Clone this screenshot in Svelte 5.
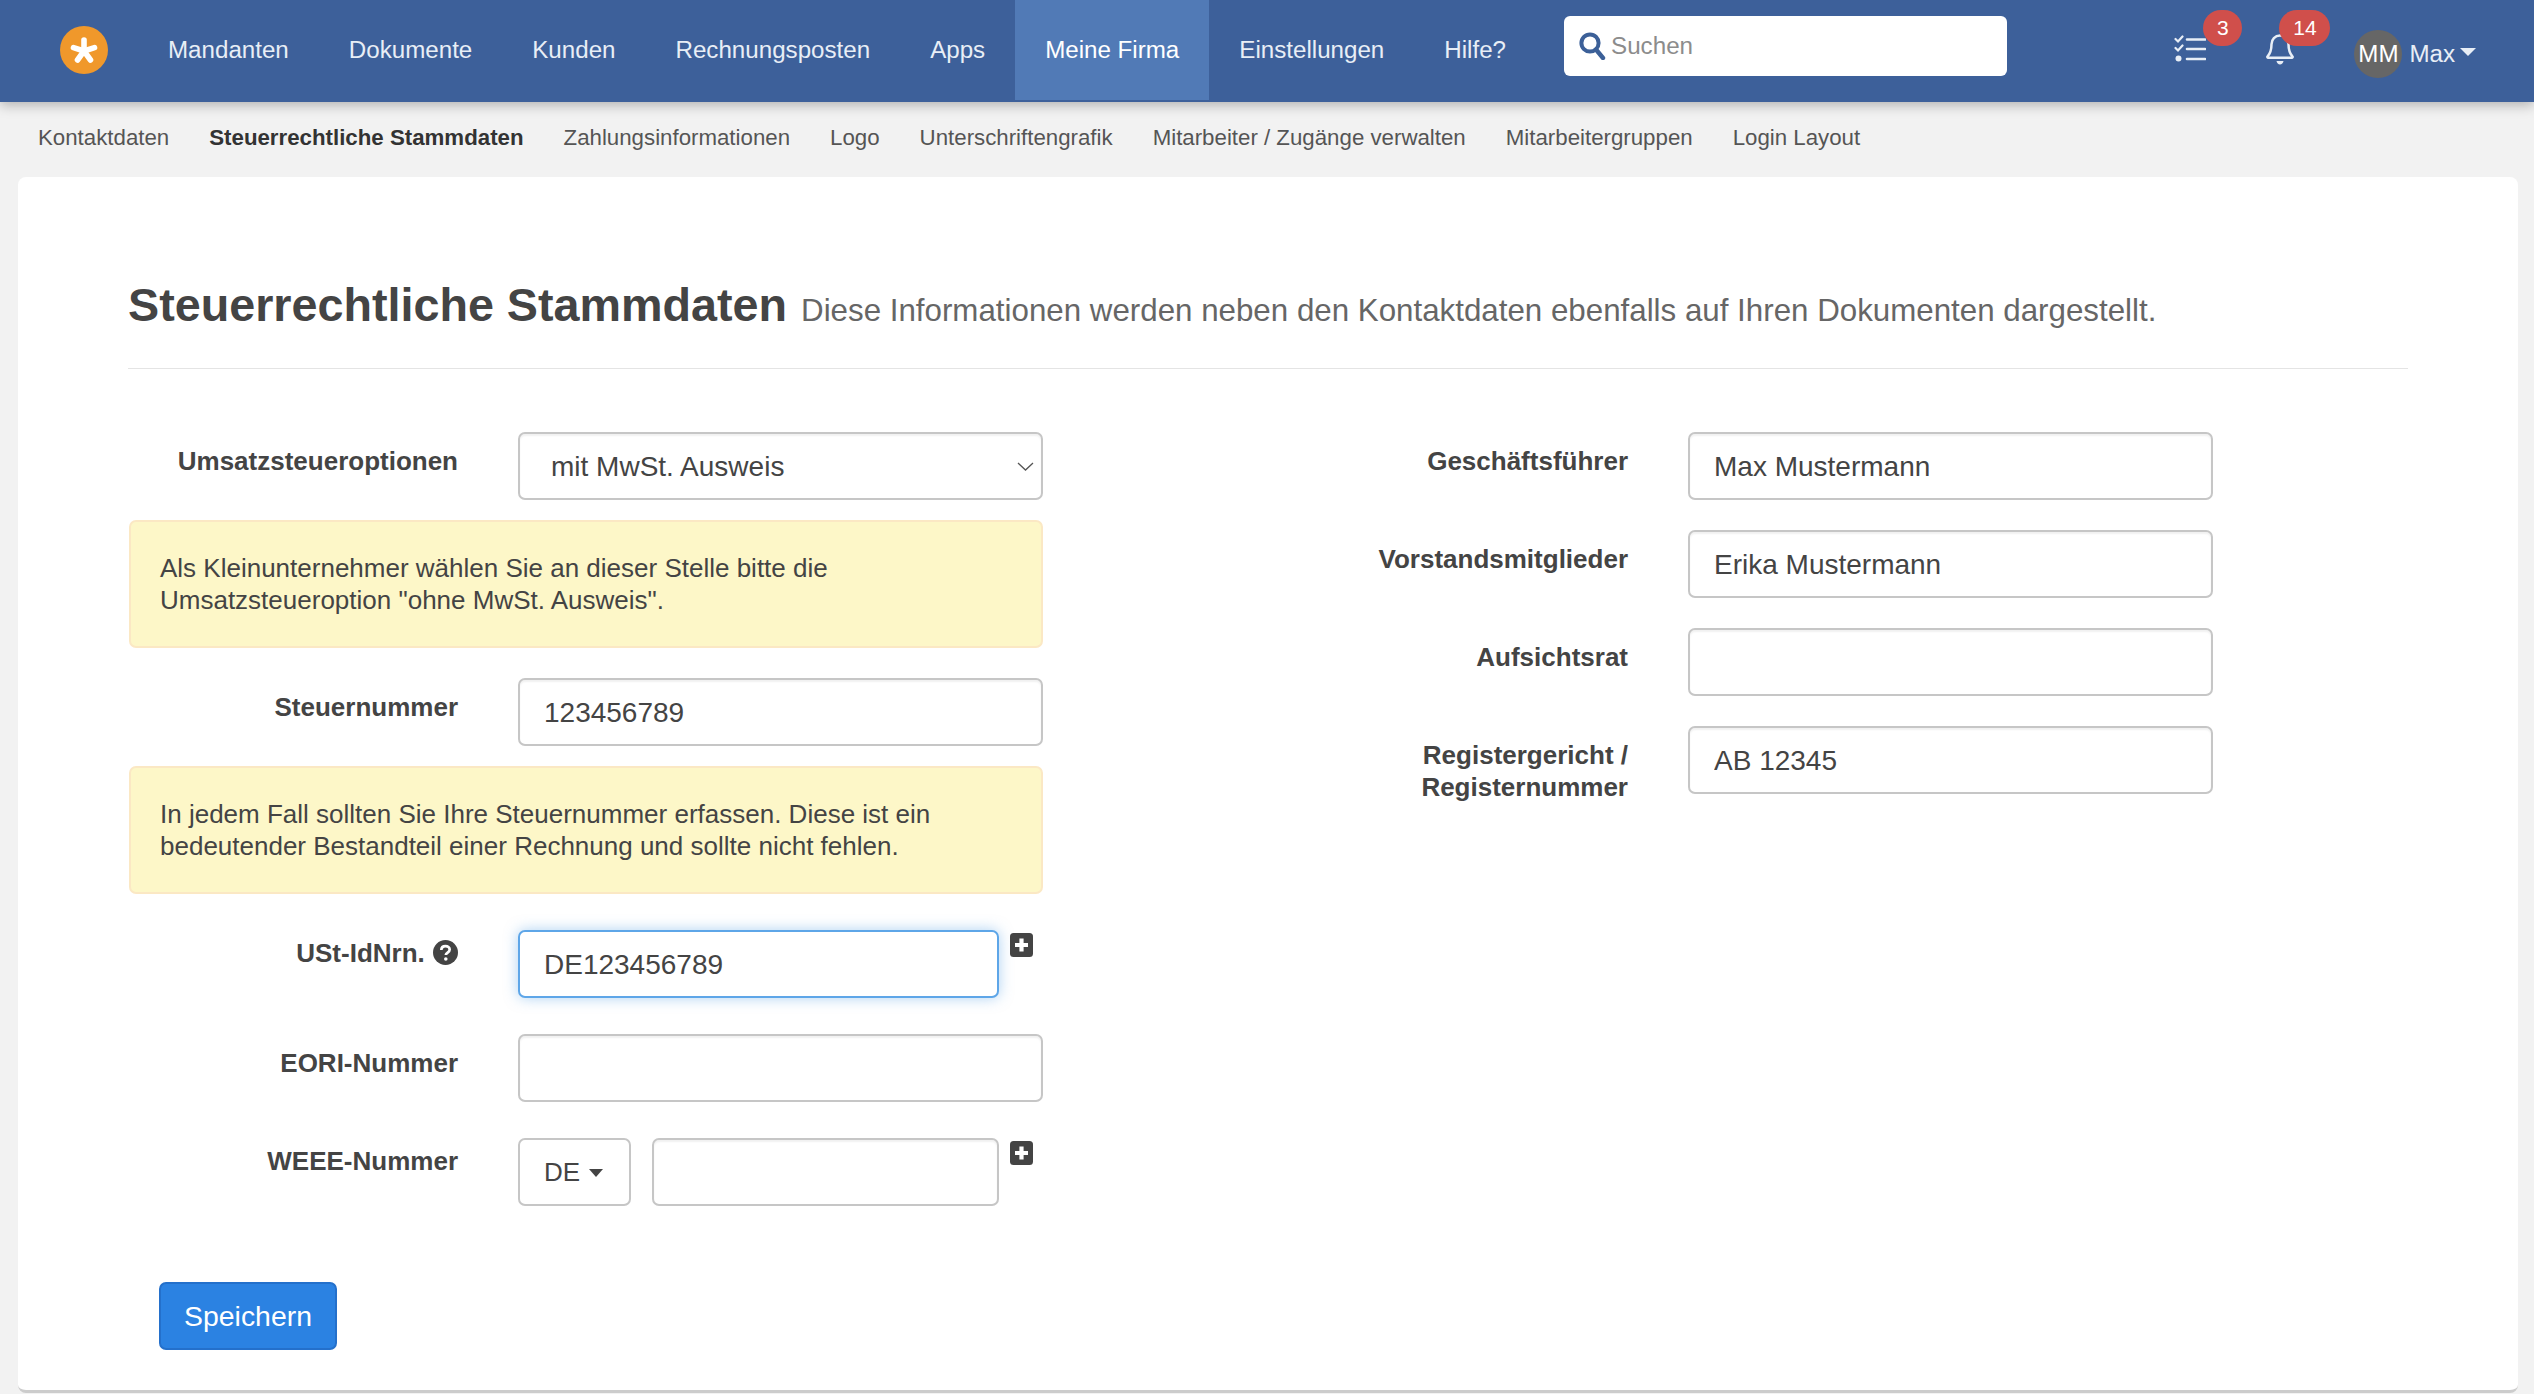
<script>
  const navLinks = ['Mandanten', 'Dokumente', 'Kunden', 'Rechnungsposten', 'Apps', 'Meine Firma', 'Einstellungen', 'Hilfe?'];
  const subLinks = ['Kontaktdaten', 'Steuerrechtliche Stammdaten', 'Zahlungsinformationen', 'Logo', 'Unterschriftengrafik', 'Mitarbeiter / Zugänge verwalten', 'Mitarbeitergruppen', 'Login Layout'];
  const rightFields = [
    { label: 'Geschäftsführer', value: 'Max Mustermann' },
    { label: 'Vorstandsmitglieder', value: 'Erika Mustermann' },
    { label: 'Aufsichtsrat', value: '' },
    { label: 'Registergericht / Registernummer', value: 'AB 12345' },
  ];
</script>

<header class="navbar">
  <a class="logo" href="#top" aria-label="Startseite">
    <svg viewBox="0 0 48 48" width="48" height="48">
      <circle cx="24" cy="24" r="24" fill="#f0982b" />
      <g stroke="#fff" stroke-width="5.6" stroke-linecap="round">
        <path d="M24 25V14" />
        <path d="M24 25L34.5 21.6" />
        <path d="M24 25L30.5 34" />
        <path d="M24 25L17.5 34" />
        <path d="M24 25L13.5 21.6" />
      </g>
    </svg>
  </a>
  <nav class="nav-links">
    {#each navLinks as link}
      <a href="#top" class:active={link === 'Meine Firma'}>{link}</a>
    {/each}
  </nav>
  <div class="search">
    <svg viewBox="0 0 28 28" width="28" height="28">
      <circle cx="12" cy="11" r="8.6" fill="none" stroke="#3c6098" stroke-width="4" />
      <path d="M18 17.5L25 26" stroke="#3c6098" stroke-width="4.4" stroke-linecap="round" />
    </svg>
    <input type="text" placeholder="Suchen" />
  </div>
  <div class="tools">
    <div class="tool tasks">
      <svg viewBox="0 0 32 27" width="32" height="27">
        <g fill="none" stroke="#e8eef6" stroke-linecap="round">
          <path d="M1.5 4l2.5 2.5L8.5 1.5" stroke-width="2.2" />
          <path d="M1.5 13l2.5 2.5L8.5 10.5" stroke-width="2.2" />
          <path d="M13 4.500H31M13 14H31M13 24H31" stroke-width="2.6" />
        </g>
        <circle cx="4.500" cy="23.500" r="3" fill="#e8eef6" />
      </svg>
      <span class="badge three">3</span>
    </div>
    <div class="tool bell">
      <svg viewBox="0 0 28 32" width="28" height="32">
        <path d="M14 2.500c-5 0-8.500 3.800-8.500 8.800 0 6.500-1.500 9.500-4 12.200-.4.500 0 1.300.6 1.300h23.800c.6 0 1-.8.600-1.300-2.500-2.700-4-5.700-4-12.200 0-5-3.500-8.800-8.500-8.800z" fill="none" stroke="#e8eef6" stroke-width="2.500" stroke-linejoin="round" />
        <path d="M10.500 28h7c-.4 2-1.800 3.500-3.500 3.500s-3.100-1.500-3.500-3.500z" fill="#e8eef6" />
      </svg>
      <span class="badge fourteen">14</span>
    </div>
    <div class="user">
      <span class="avatar">MM</span>
      <span class="user-name">Max</span>
      <span class="user-caret"></span>
    </div>
  </div>
</header>

<nav class="subnav">
  {#each subLinks as link}
    <a href="#top" class:current={link === 'Steuerrechtliche Stammdaten'}>{link}</a>
  {/each}
</nav>

<main class="card">
  <div class="page-header">
    <h1>Steuerrechtliche Stammdaten</h1>
    <small>Diese Informationen werden neben den Kontaktdaten ebenfalls auf Ihren Dokumenten dargestellt.</small>
  </div>

  <div class="columns">
    <div class="col">
      <div class="row before-alert">
        <span class="label">Umsatzsteueroptionen</span>
        <div class="select-wrap">
          <select>
            <option>mit MwSt. Ausweis</option>
            <option>ohne MwSt. Ausweis</option>
          </select>
          <svg class="chevron" viewBox="0 0 17 9" width="17" height="9">
            <path d="M1 1l7.500 7L16 1" fill="none" stroke="#555" stroke-width="1.300" />
          </svg>
        </div>
      </div>
      <div class="alert">Als Kleinunternehmer wählen Sie an dieser Stelle bitte die Umsatzsteueroption "ohne MwSt. Ausweis".</div>

      <div class="row before-alert">
        <span class="label">Steuernummer</span>
        <input type="text" value="123456789" />
      </div>
      <div class="alert last-alert">In jedem Fall sollten Sie Ihre Steuernummer erfassen. Diese ist ein bedeutender Bestandteil einer Rechnung und sollte nicht fehlen.</div>

      <div class="row">
        <span class="label high">
          USt-IdNrn.
          <svg class="help" viewBox="0 0 24 24" width="25" height="25">
            <circle cx="12" cy="12" r="12" fill="#444" />
            <path d="M8 9.500c0-2.400 1.800-3.700 4-3.700s4 1.300 4 3.300c0 3-3.700 2.800-3.700 5.400" fill="none" stroke="#fff" stroke-width="2.600" />
            <circle cx="12.300" cy="18.300" r="1.700" fill="#fff" />
          </svg>
        </span>
        <div class="with-plus">
          <input class="focused" type="text" value="DE123456789" />
          <svg class="plus" viewBox="0 0 23 24" width="23" height="24">
            <rect width="23" height="24" rx="3.500" fill="#444" />
            <path d="M11.500 5.500v13M5 12h13" stroke="#fff" stroke-width="4.200" />
          </svg>
        </div>
      </div>

      <div class="row">
        <span class="label">EORI-Nummer</span>
        <input type="text" />
      </div>

      <div class="row last">
        <span class="label high">WEEE-Nummer</span>
        <div class="with-plus">
          <button class="country" type="button">DE <span class="caret"></span></button>
          <input type="text" />
          <svg class="plus" viewBox="0 0 23 24" width="23" height="24">
            <rect width="23" height="24" rx="3.500" fill="#444" />
            <path d="M11.500 5.500v13M5 12h13" stroke="#fff" stroke-width="4.200" />
          </svg>
        </div>
      </div>

      <button class="save" type="button">Speichern</button>
    </div>

    <div class="col">
      {#each rightFields as field}
        <div class="row side">
          <span class="label">{field.label}</span>
          <input type="text" value={field.value} />
        </div>
      {/each}
    </div>
  </div>
</main>

<style>
  :global(body) {
    background: #f2f2f2;
    color: #444;
    font-family: "Liberation Sans", Arial, sans-serif;
    overflow: hidden;
  }

  a {
    text-decoration: none;
    color: inherit;
  }

  .navbar {
    display: flex;
    height: 102px;
    background: #3d609a;
    box-shadow: 0 3px 12px rgba(0, 0, 0, 0.28);
    position: relative;
    font-size: 24.15px;
    color: #e8eef6;
  }

  .logo {
    display: block;
    height: 48px;
    margin: 26px 30px 0 60px;
  }

  .nav-links {
    display: flex;
    height: 100px;
  }

  .nav-links a {
    display: flex;
    align-items: center;
    padding: 0 30px;
  }

  .nav-links a.active {
    background: #517ab6;
    color: #fff;
  }

  .search {
    display: flex;
    align-items: center;
    gap: 5px;
    width: 443px;
    height: 60px;
    margin: 16px 0 0 28px;
    padding-left: 14px;
    box-sizing: border-box;
    background: #fff;
    border-radius: 6px;
  }

  .search input {
    border: 0;
    outline: 0;
    height: 50px;
    padding: 0;
    margin: 0;
    width: 380px;
    box-shadow: none;
    border-radius: 0;
    font-size: 24.2px;
  }

  .search input::placeholder {
    color: #8c8c8c;
  }

  .tools {
    display: flex;
    margin-left: auto;
    padding-right: 58px;
  }

  .tool {
    position: relative;
  }

  .tasks {
    width: 32px;
    margin-top: 35px;
  }

  .tasks svg,
  .bell svg {
    display: block;
  }

  .bell {
    width: 28px;
    margin: 33px 0 0 60px;
  }

  .badge {
    position: absolute;
    height: 36px;
    border-radius: 18px;
    background: #d04f4b;
    color: #fff;
    font-size: 21px;
    line-height: 35px;
    text-align: center;
  }

  .three {
    left: 29px;
    top: -25px;
    width: 39px;
  }

  .fourteen {
    left: 13px;
    top: -23px;
    width: 51px;
  }

  .user {
    display: flex;
    align-items: center;
    height: 48px;
    margin: 30px 0 0 60px;
  }

  .avatar {
    width: 48px;
    height: 48px;
    border-radius: 50%;
    background: #666;
    color: #fff;
    text-align: center;
    line-height: 48px;
  }

  .user-name {
    margin-left: 7px;
  }

  .user-caret {
    margin: 0 0 4px 5px;
    border-top: 8px solid #e8eef6;
    border-left: 8px solid transparent;
    border-right: 8px solid transparent;
  }

  .subnav {
    display: flex;
    gap: 40px;
    height: 72px;
    padding: 0 0 3px 38px;
    align-items: center;
    font-size: 22.27px;
    color: #555;
  }

  .subnav a.current {
    font-weight: 700;
    color: #333;
  }

  .card {
    margin: 0 16px 0 18px;
    height: 1216px;
    box-sizing: border-box;
    padding: 0 110px;
    background: #fff;
    border-radius: 8px;
    border-bottom: 3px solid #ccc;
  }

  .page-header {
    display: flex;
    align-items: baseline;
    gap: 14px;
    height: 192px;
    box-sizing: border-box;
    padding-top: 98px;
    border-bottom: 1px solid #e4e4e4;
  }

  h1 {
    margin: 0;
    font-size: 46.7px;
    line-height: 60px;
    font-weight: 700;
    color: #444;
  }

  small {
    font-size: 31.3px;
    color: #666;
  }

  .columns {
    display: grid;
    grid-template-columns: 914px 914px;
    column-gap: 256px;
    margin: 63px 0 0 1px;
  }

  .row {
    display: grid;
    grid-template-columns: 329px 525px;
    column-gap: 60px;
    margin-bottom: 36px;
  }

  .row.before-alert {
    margin-bottom: 20px;
  }

  .row.last {
    margin-bottom: 76px;
  }

  .row.side {
    margin-bottom: 30px;
  }

  .label {
    padding-top: 13px;
    font-size: 26px;
    line-height: 32px;
    font-weight: 700;
    text-align: right;
    color: #444;
  }

  .label.high {
    padding-top: 7px;
  }

  .help {
    vertical-align: -3px;
    margin-left: 1px;
  }

  input,
  select {
    display: block;
    width: 100%;
    height: 68px;
    box-sizing: border-box;
    padding: 1px 24px 0;
    background: #fff;
    border: 2px solid #c6c6c6;
    border-radius: 7px;
    box-shadow: inset 0 2px 2px rgba(0, 0, 0, 0.06);
    font: 28px "Liberation Sans", Arial, sans-serif;
    color: #444;
    outline: 0;
  }

  select {
    appearance: none;
    padding-left: 31px;
  }

  .select-wrap {
    position: relative;
  }

  .chevron {
    position: absolute;
    right: 9px;
    top: 30px;
  }

  input.focused {
    border-color: #5ea6e8;
    box-shadow: 0 0 14px rgba(94, 166, 232, 0.5);
  }

  .with-plus {
    display: flex;
    width: 515px;
  }

  .with-plus input {
    flex: 1;
    min-width: 0;
  }

  .plus {
    flex: none;
    margin: 3px 0 0 11px;
  }

  .country {
    flex: none;
    width: 113px;
    height: 68px;
    margin-right: 21px;
    padding: 1px 0 0 24px;
    text-align: left;
    background: #fff;
    border: 2px solid #c6c6c6;
    border-radius: 7px;
    font: 26px "Liberation Sans", Arial, sans-serif;
    color: #444;
  }

  .caret {
    display: inline-block;
    vertical-align: 4px;
    margin-left: 2px;
    border-top: 8px solid #444;
    border-left: 7.5px solid transparent;
    border-right: 7.5px solid transparent;
  }

  .save {
    display: block;
    width: 178px;
    height: 68px;
    margin-left: 30px;
    background: #2b82e2;
    border: 2px solid #2470cb;
    border-radius: 7px;
    color: #fff;
    font: 28.4px "Liberation Sans", Arial, sans-serif;
  }

  .alert {
    height: 128px;
    box-sizing: border-box;
    margin-bottom: 30px;
    padding: 30px 29px;
    background: #fdf7c8;
    border: 2px solid #fbe8c4;
    border-radius: 7px;
    font-size: 26px;
    line-height: 32px;
    color: #444;
  }

  .alert.last-alert {
    margin-bottom: 36px;
  }
</style>
